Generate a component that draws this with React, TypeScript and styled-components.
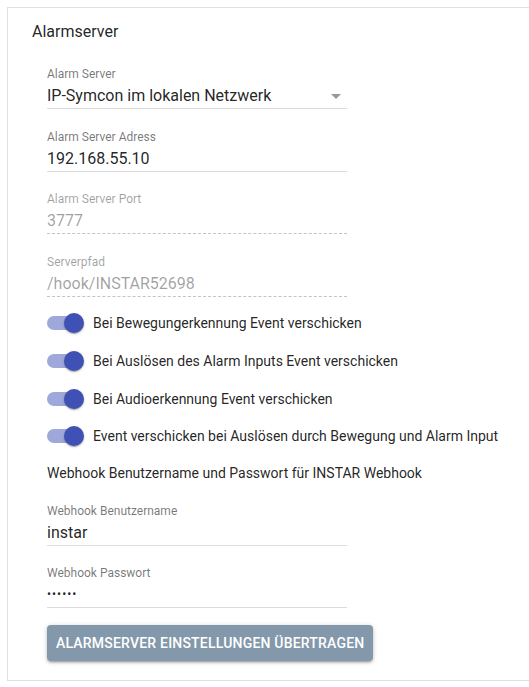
import React from 'react';
import styled, { createGlobalStyle } from 'styled-components';

const GlobalStyle = createGlobalStyle`
  html, body {
    margin: 0;
    padding: 0;
    background: #fff;
    overflow: hidden;
  }
  body {
    font-family: Roboto, "Liberation Sans", Arial, sans-serif;
    color: rgba(0, 0, 0, 0.87);
  }
`;

const Page = styled.div`
  padding: 7px 0 0 7px;
`;

const Card = styled.section`
  width: 540px;
  height: 674px;
  box-sizing: border-box;
  border: 1px solid #e0e0e0;
  padding: 12px 24px 0;
`;

const Title = styled.h2`
  margin: 0;
  font-size: 16px;
  font-weight: 400;
  line-height: 24px;
  color: rgba(0, 0, 0, 0.87);
`;

const Form = styled.div`
  display: flex;
  flex-direction: column;
  padding: 2.5px 0 0 15px;
`;

const Field = styled.label`
  position: relative;
  display: flex;
  flex-direction: column;
  width: 300px;
  margin-top: 20.5px;
`;

const FieldLabel = styled.span<{ $disabled?: boolean }>`
  font-size: 12px;
  line-height: 14px;
  color: ${(p) => (p.$disabled ? 'rgba(0, 0, 0, 0.38)' : 'rgba(0, 0, 0, 0.54)')};
`;

const Input = styled.input<{ $disabled?: boolean }>`
  font: inherit;
  font-size: 16px;
  line-height: 19px;
  height: 19px;
  margin: 0;
  padding: 5px 0 3px;
  border: 0;
  outline: none;
  background: transparent;
  color: ${(p) => (p.$disabled ? 'rgba(0, 0, 0, 0.38)' : 'rgba(0, 0, 0, 0.87)')};
  border-bottom: 1px ${(p) => (p.$disabled ? 'dashed #c4c4c4' : 'solid #dcdcdc')};
  &[type='password'] {
    font-size: 12px;
    letter-spacing: 1px;
  }
`;

const Caret = styled.span`
  position: absolute;
  right: 6px;
  top: 27px;
  width: 0;
  height: 0;
  border-left: 5px solid transparent;
  border-right: 5px solid transparent;
  border-top: 5px solid rgba(0, 0, 0, 0.4);
`;

const SwitchGroup = styled.div`
  display: flex;
  flex-direction: column;
  margin-top: 8px;
`;

const SwitchRow = styled.div`
  display: flex;
  align-items: center;
  height: 37.7px;
`;

const Track = styled.span`
  position: relative;
  display: inline-block;
  width: 34px;
  height: 14px;
  border-radius: 7px;
  background: #9fa8da;
  margin-right: 12px;
`;

const Thumb = styled.span`
  position: absolute;
  left: 17px;
  top: -3px;
  width: 20px;
  height: 20px;
  border-radius: 50%;
  background: #3f51b5;
  box-shadow: 0 1px 3px rgba(0, 0, 0, 0.2), 0 1px 1px rgba(0, 0, 0, 0.14),
    0 2px 1px -1px rgba(0, 0, 0, 0.12);
`;

const SwitchText = styled.span`
  font-size: 14px;
  line-height: 20px;
`;

const Note = styled.p`
  margin: 8px 0 0;
  font-size: 14px;
  line-height: 20px;
`;

const SubmitButton = styled.button`
  align-self: flex-start;
  margin-top: 17px;
  height: 36px;
  padding: 0 9px;
  border: 0;
  border-radius: 4px;
  background: #8498ab;
  color: #fff;
  font-family: Roboto, "Liberation Sans", Arial, sans-serif;
  font-size: 14px;
  font-weight: 500;
  letter-spacing: 0.2px;
  text-transform: uppercase;
  box-shadow: 0 1px 5px rgba(0, 0, 0, 0.2), 0 2px 2px rgba(0, 0, 0, 0.14),
    0 3px 1px -2px rgba(0, 0, 0, 0.12);
`;

const switches = [
  'Bei Bewegungerkennung Event verschicken',
  'Bei Auslösen des Alarm Inputs Event verschicken',
  'Bei Audioerkennung Event verschicken',
  'Event verschicken bei Auslösen durch Bewegung und Alarm Input',
];

const App = () => {
  return (
    <Page>
      <GlobalStyle />
      <Card>
        <Title>Alarmserver</Title>
        <Form>
          <Field>
            <FieldLabel>Alarm Server</FieldLabel>
            <Input readOnly value="IP-Symcon im lokalen Netzwerk" />
            <Caret />
          </Field>
          <Field>
            <FieldLabel>Alarm Server Adress</FieldLabel>
            <Input readOnly value="192.168.55.10" />
          </Field>
          <Field>
            <FieldLabel $disabled>Alarm Server Port</FieldLabel>
            <Input $disabled readOnly value="3777" />
          </Field>
          <Field>
            <FieldLabel $disabled>Serverpfad</FieldLabel>
            <Input $disabled readOnly value="/hook/INSTAR52698" />
          </Field>
          <SwitchGroup>
            {switches.map((text) => (
              <SwitchRow key={text}>
                <Track>
                  <Thumb />
                </Track>
                <SwitchText>{text}</SwitchText>
              </SwitchRow>
            ))}
          </SwitchGroup>
          <Note>Webhook Benutzername und Passwort für INSTAR Webhook</Note>
          <Field>
            <FieldLabel>Webhook Benutzername</FieldLabel>
            <Input readOnly value="instar" />
          </Field>
          <Field>
            <FieldLabel>Webhook Passwort</FieldLabel>
            <Input type="password" readOnly value="instar" />
          </Field>
          <SubmitButton>Alarmserver Einstellungen übertragen</SubmitButton>
        </Form>
      </Card>
    </Page>
  );
};

export default App;
